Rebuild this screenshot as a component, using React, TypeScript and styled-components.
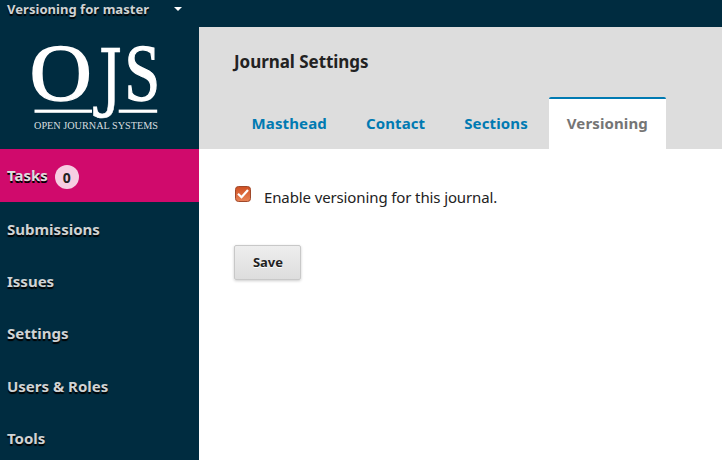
import React, { useState } from "react";
import styled, { createGlobalStyle } from "styled-components";

const GlobalStyle = createGlobalStyle`
  * { box-sizing: border-box; }
  body {
    margin: 0;
    overflow: hidden;
    background: #fff;
    color: #222;
    font-family: "Noto Sans", sans-serif;
  }
`;

const Page = styled.div`
  display: grid;
  grid-template: 27px 433px / 199px 1fr;
  height: 460px;
`;

const TopBar = styled.header`
  grid-column: 1 / -1;
  display: flex;
  align-items: flex-start;
  padding-left: 7px;
  background: #002c40;
`;

const ContextButton = styled.button`
  display: flex;
  align-items: center;
  gap: 25px;
  padding: 0;
  border: 0;
  background: none;
  color: #d0d3d4;
  font: 700 13px/18px "Noto Sans", sans-serif;
  letter-spacing: 0.04px;
  text-shadow: 0 2px 1px #000;
`;

const Caret = styled.i`
  border: 4px solid transparent;
  border-top-color: #fff;
  border-bottom: 0;
`;

const Sidebar = styled.aside`
  background: #002c40;
`;

const Logo = styled.svg`
  display: block;
  width: 199px;
  height: 122px;
  fill: #fff;
`;

const Tasks = styled.a`
  display: flex;
  align-items: center;
  gap: 7px;
  height: 53px;
  padding: 0 7px 1px;
  background: #d00a6c;
  color: #ddd;
  font-size: 15px;
  font-weight: 700;
  text-shadow: 0 2px 0 #000;
`;

const Count = styled.span`
  width: 24px;
  height: 24px;
  margin-top: 3px;
  border-radius: 50%;
  background: #f6cee2;
  color: #222;
  font-size: 14px;
  line-height: 25px;
  text-align: center;
  text-shadow: none;
`;

const Nav = styled.nav`
  display: flex;
  flex-direction: column;
  padding-top: 1px;
`;

const NavItem = styled.a`
  height: 52.2px;
  padding-left: 7px;
  color: #d0d3d4;
  font-size: 15px;
  font-weight: 700;
  line-height: 53px;
  text-shadow: 0 2px 1px #000;
`;

const Main = styled.main`
  background: #fff;
`;

const Heading = styled.header`
  display: flex;
  flex-direction: column;
  justify-content: space-between;
  height: 122px;
  padding-left: 35px;
  background: #ddd;
`;

const Title = styled.h1`
  margin: 22px 0 0;
  font-size: 17px;
  line-height: 26px;
  letter-spacing: -0.05px;
`;

const Tabs = styled.div`
  display: flex;
  gap: 3.8px;
  height: 52px;
`;

const Tab = styled.button<{ $active: boolean }>`
  padding: 0 17.6px 2px;
  border: 0;
  border-top: 2px solid ${(p) => (p.$active ? "#007ab2" : "transparent")};
  border-radius: 2px 2px 0 0;
  background: ${(p) => (p.$active ? "#fff" : "transparent")};
  color: ${(p) => (p.$active ? "#757575" : "#007ab2")};
  font: 700 15px/48px "Noto Sans", sans-serif;
  letter-spacing: 0.12px;
`;

const Form = styled.form`
  padding: 37px 35px;
`;

const Option = styled.label`
  display: flex;
  align-items: flex-start;
  gap: 13px;
  margin-left: 1px;
  font-size: 15px;
  line-height: 22px;
  letter-spacing: -0.12px;
`;

const Check = styled.svg`
  width: 16px;
  height: 16px;
`;

const OptionText = styled.span``;

const Save = styled.button`
  display: block;
  width: 67px;
  height: 35px;
  margin: 37px 0 0;
  padding: 0 0 0 1px;
  border: 1px solid #c8c8c8;
  border-radius: 2px;
  background: linear-gradient(#eee, #ddd);
  box-shadow: 0 1px 3px rgba(0, 0, 0, 0.2);
  color: #222;
  font: 700 13px/31px "Noto Sans", sans-serif;
  text-shadow: 0 1px 0 #fff;
`;

const sections = ["Submissions", "Issues", "Settings", "Users & Roles", "Tools"];
const tabs = ["Masthead", "Contact", "Sections", "Versioning"];

export default function App() {
  const [active, setActive] = useState("Versioning");
  return (
    <>
      <GlobalStyle />
      <Page>
        <TopBar>
          <ContextButton>
            Versioning for master <Caret />
          </ContextButton>
        </TopBar>
        <Sidebar>
          <Logo viewBox="0 27 199 122" aria-label="Open Journal Systems">
            <text fontFamily="Liberation Serif" fontSize="80" stroke="#fff" strokeWidth="1.3" transform="translate(29.4 100.2) scale(1.08 1)">O</text>
            <text fontFamily="DejaVu Serif" fontSize="75" stroke="#fff" strokeWidth=".6" transform="translate(98.4 102) scale(.8 1)">J</text>
            <text fontFamily="Liberation Serif" fontSize="80" stroke="#fff" strokeWidth="1.3" transform="translate(124.6 100.2) scale(.8 1)">S</text>
            <rect x="34.5" y="109.6" width="57.5" height="3.2" />
            <rect x="118.7" y="109.6" width="38.5" height="3.2" />
            <text x="34" y="129" fontFamily="Liberation Serif" fontSize="9.7" textLength="124" lengthAdjust="spacingAndGlyphs" fillOpacity=".85">OPEN JOURNAL SYSTEMS</text>
          </Logo>
          <Tasks>
            Tasks <Count>0</Count>
          </Tasks>
          <Nav>
            {sections.map((s) => (
              <NavItem key={s}>{s}</NavItem>
            ))}
          </Nav>
        </Sidebar>
        <Main>
          <Heading>
            <Title>Journal Settings</Title>
            <Tabs>
              {tabs.map((t) => (
                <Tab key={t} $active={t === active} onClick={() => setActive(t)}>
                  {t}
                </Tab>
              ))}
            </Tabs>
          </Heading>
          <Form onSubmit={(e) => e.preventDefault()}>
            <Option>
              <Check viewBox="0 0 16 16">
                <defs>
                  <linearGradient id="check-fill" x2="0" y2="1">
                    <stop stopColor="#cf4f22" />
                    <stop offset="1" stopColor="#e98457" />
                  </linearGradient>
                </defs>
                <rect x=".5" y=".5" width="15" height="15" rx="3" fill="url(#check-fill)" stroke="#a0492b" />
                <path d="M3 7.8 6.5 11.2 13 4" fill="none" stroke="#fff" strokeWidth="2.3" />
              </Check>
              <OptionText>Enable versioning for this journal.</OptionText>
            </Option>
            <Save>Save</Save>
          </Form>
        </Main>
      </Page>
    </>
  );
}
